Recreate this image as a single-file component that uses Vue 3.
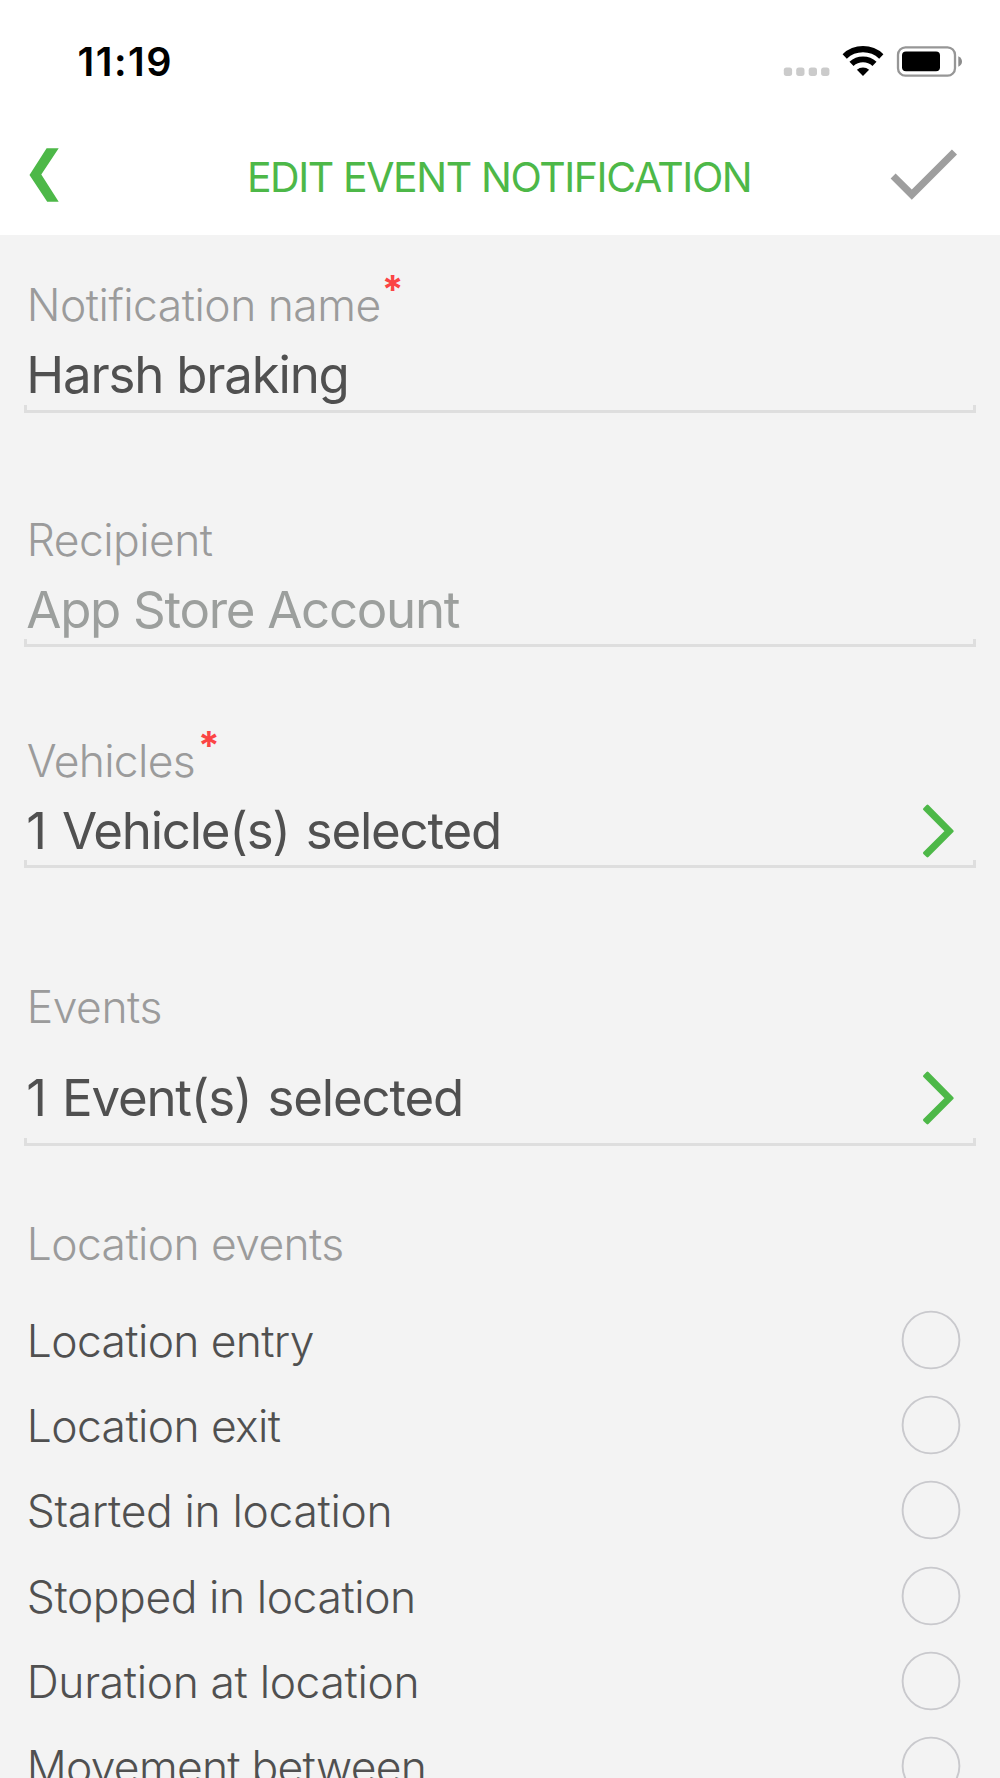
<script setup>
const fields = [
  { id: 'name', label: 'Notification name', labelTrack: -0.5, required: true, value: 'Harsh braking', track: -1.2 },
  { id: 'recipient', label: 'Recipient', labelTrack: -0.55, value: 'App Store Account', track: -1.3, muted: true },
  { id: 'vehicles', label: 'Vehicles', labelTrack: -0.7, required: true, value: '1 Vehicle(s) selected', track: -1.24, link: true },
  { id: 'events', label: 'Events', labelTrack: -0.46, value: '1 Event(s) selected', track: -1.2, link: true },
]

const options = [
  { text: 'Location entry', track: -0.63 },
  { text: 'Location exit', track: -0.6 },
  { text: 'Started in location', track: -0.33 },
  { text: 'Stopped in location', track: -0.42 },
  { text: 'Duration at location', track: -0.35 },
  { text: 'Movement between', track: -0.72 },
]
</script>

<template>
  <div class="screen">
    <div class="status">
      <span class="clock">11:19</span>
      <svg class="indicators" viewBox="780 38 190 46" aria-hidden="true">
        <g fill="#cbcbcb">
          <rect x="783.8" y="67.6" width="8.3" height="8.3" rx="2.6" />
          <rect x="796.2" y="67.6" width="8.3" height="8.3" rx="2.6" />
          <rect x="808.7" y="67.6" width="8.3" height="8.3" rx="2.6" />
          <rect x="821.1" y="67.6" width="8.3" height="8.3" rx="2.6" />
        </g>
        <path d="M844.7 56.4A26.8 26.8 0 0 1 881.3 56.4" fill="none" stroke="#000" stroke-width="6.2" />
        <path d="M851.5 63.9A16.8 16.8 0 0 1 874.5 63.9" fill="none" stroke="#000" stroke-width="5.9" />
        <path d="M863 76L856.9 69.8A9 9 0 0 1 869.1 69.8Z" />
        <rect x="898" y="47.3" width="57" height="28.4" rx="7.5" fill="none" stroke="#969696" stroke-width="2.3" />
        <rect x="902" y="51.5" width="38" height="19.8" rx="4" />
        <path d="M958.3 56.2Q962 58 962 61.5T958.3 66.8Z" fill="#8c8c8c" />
      </svg>
    </div>

    <header class="nav">
      <svg class="nav-icon" viewBox="0 112 120 123" aria-label="Back">
        <path d="M46.6 148.3H58.7L41.3 174.6L58.7 201.7H47.2L29.5 174.9Z" fill="#4db848" />
      </svg>
      <h1 class="title">EDIT EVENT NOTIFICATION</h1>
      <svg class="nav-icon" viewBox="880 112 120 123" aria-label="Save">
        <path d="M890.6 178.5L895.6 173.5L911.8 189.6L951.9 149.4L957 154.5L911.8 199.8Z" fill="#9e9e9e" />
      </svg>
    </header>

    <main class="form">
      <section v-for="f in fields" :key="f.id" class="field" :class="f.id">
        <div class="label-row">
          <span class="label" :style="{ letterSpacing: f.labelTrack + 'px' }">{{ f.label }}</span>
          <span v-if="f.required" class="star">*</span>
        </div>
        <div class="value-row">
          <span class="value" :class="{ muted: f.muted, counted: f.link }" :style="{ letterSpacing: f.track + 'px' }">{{ f.value }}</span>
          <svg v-if="f.link" class="chevron" viewBox="920 799.6 40 60" aria-hidden="true">
            <path
              d="M927.5 805.6L952.4 830.7L927.5 855.8L924.3 852.6L946.2 830.7L924.3 808.8Z"
              fill="#4db848" stroke="#4db848" stroke-width="2.6" stroke-linejoin="round"
            />
          </svg>
        </div>
        <div class="underline"></div>
      </section>

      <h2 class="label group-title">Location events</h2>
      <ul class="options">
        <li v-for="o in options" :key="o.text" class="option">
          <span class="option-text" :style="{ letterSpacing: o.track + 'px' }">{{ o.text }}</span>
          <svg class="radio" viewBox="0 0 60 60" aria-hidden="true">
            <circle cx="30" cy="30" r="28.4" fill="none" stroke="#c9c9cd" stroke-width="1.9" />
          </svg>
        </li>
      </ul>
    </main>
  </div>
</template>

<style>
body {
  margin: 0;
  overflow: hidden;
}
</style>

<style scoped>
.screen {
  width: 1000px;
  height: 1778px;
  overflow: hidden;
  background: #f3f3f3;
  font-family: Inter, "Liberation Sans", sans-serif;
  color: #505050;
}
.status {
  display: flex;
  justify-content: space-between;
  box-sizing: border-box;
  height: 112px;
  padding: 38px 30px 0 77.5px;
  background: #fff;
}
.clock {
  padding-top: 1px;
  font-size: 39.5px;
  font-weight: 600;
  line-height: 46px;
  letter-spacing: 1.5px;
  color: #000;
}
.indicators {
  width: 190px;
  height: 46px;
}
.nav {
  display: flex;
  height: 123px;
  background: #fff;
}
.nav-icon {
  flex: none;
  width: 120px;
  height: 123px;
}
.title {
  flex: 1;
  margin: 0;
  padding: 40px 1.8px 0 0;
  font-size: 41px;
  font-weight: 400;
  line-height: 50px;
  letter-spacing: -1.42px;
  text-align: center;
  white-space: nowrap;
  color: #4db848;
}
.form {
  padding-top: 43px;
}
.label-row {
  display: flex;
  height: 54px;
  padding-left: 26.8px;
}
.label {
  font-size: 44.4px;
  font-weight: 300;
  line-height: 54px;
  color: #9b9b9b;
}
.star {
  height: 40px;
  margin: -8px 0 0 1px;
  font-size: 39px;
  font-weight: 700;
  line-height: 40px;
  color: #fb4444;
}
.vehicles .star {
  margin-left: 3px;
}
.value-row {
  display: flex;
  justify-content: space-between;
  height: 60px;
  margin-top: 12px;
  padding: 0 40px 0 26.3px;
}
.value {
  padding-top: 1px;
  font-size: 51px;
  line-height: 60px;
}
.value.muted {
  color: #9c9f9d;
}
.value.counted {
  word-spacing: 3px;
}
.chevron {
  width: 40px;
  height: 60px;
}
.underline {
  box-sizing: border-box;
  height: 8px;
  margin: 1px 24px 0;
  border: solid #dedede;
  border-width: 0 3px 3px;
}
.recipient {
  margin-top: 100px;
}
.recipient .underline {
  margin-top: 0;
}
.vehicles {
  margin-top: 87px;
}
.vehicles .underline {
  margin-top: 0;
}
.events {
  margin-top: 112px;
}
.events .value-row {
  margin-top: 33px;
}
.events .underline {
  margin-top: 11px;
}
.group-title {
  margin: 71px 0 0 26.8px;
  letter-spacing: -0.6px;
}
.options {
  margin: 26px 0 0;
  padding: 0;
  list-style: none;
}
.option {
  display: flex;
  align-items: center;
  justify-content: space-between;
  height: 85.33px;
  padding: 0 39.4px 0 26.8px;
}
.option-text {
  padding-top: 2px;
  font-size: 44.4px;
  font-weight: 300;
  line-height: 54px;
}
.radio {
  width: 60px;
  height: 60px;
}
</style>
